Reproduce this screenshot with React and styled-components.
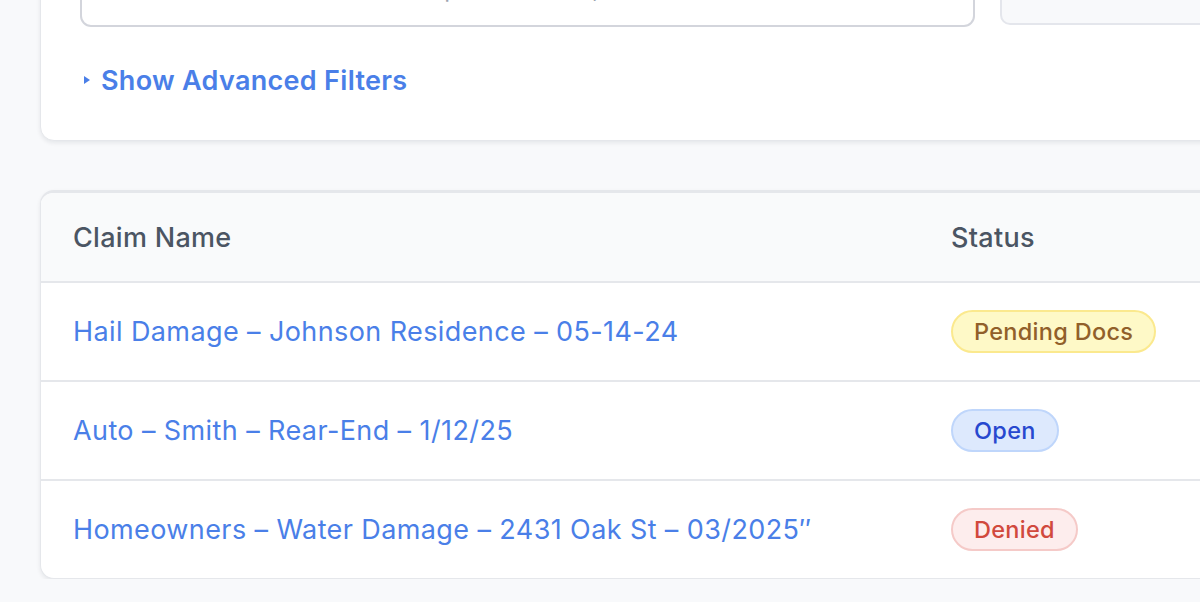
import React from "react";
import styled, { createGlobalStyle } from "styled-components";

const GlobalStyle = createGlobalStyle`
  html, body {
    margin: 0;
    padding: 0;
    background: #f8f9fb;
    overflow: hidden;
    font-family: Inter, "Noto Sans", "Liberation Sans", sans-serif;
  }
`;

const claims = [
  { name: "Hail Damage – Johnson Residence – 05-14-24", status: "pending" },
  { name: "Auto – Smith – Rear-End – 1/12/25", status: "open" },
  { name: "Homeowners – Water Damage – 2431 Oak St – 03/2025″", status: "denied" },
];

const statusLabels = {
  pending: "Pending Docs",
  open: "Open",
  denied: "Denied",
};

const badgeColors = {
  pending: { bg: "#fef9c7", border: "#fbe98e", text: "#91602a" },
  open: { bg: "#dde9fd", border: "#bfd6fb", text: "#2748cf" },
  denied: { bg: "#fdeded", border: "#f5cac8", text: "#d1493d" },
};

const App = () => {
  return (
    <>
      <GlobalStyle />
      <Page>
        <FilterCard>
          <SearchRow>
            <SearchInput placeholder="Search all claims (claimant or plate number, or file)" />
            <SortBox>Sort: Newest</SortBox>
          </SearchRow>
          <AdvancedToggle>
            <Caret />
            Show Advanced Filters
          </AdvancedToggle>
        </FilterCard>

        <TableCard>
          <HeaderRow>
            <HeadCell>Claim Name</HeadCell>
            <HeadCell>Status</HeadCell>
          </HeaderRow>
          {claims.map((c) => (
            <Row key={c.name}>
              <Cell>
                <ClaimLink href="#">{c.name}</ClaimLink>
              </Cell>
              <Cell>
                <Badge $status={c.status}>{statusLabels[c.status]}</Badge>
              </Cell>
            </Row>
          ))}
        </TableCard>
      </Page>
    </>
  );
};

export default App;

const Page = styled.div`
  width: 1500px;
  margin-top: -75px;
  padding: 0 40px;
  box-sizing: border-box;
  display: flex;
  flex-direction: column;
  gap: 49px;
`;

const FilterCard = styled.div`
  background: #fff;
  border: 1px solid #e5e7eb;
  border-radius: 14px;
  box-shadow: 0 2px 4px rgba(17, 24, 39, 0.08);
  padding: 24px 39px 44px;
  display: flex;
  flex-direction: column;
  gap: 37px;
`;

const SearchRow = styled.div`
  display: flex;
  align-items: flex-start;
  gap: 25px;
`;

const SearchInput = styled.input`
  width: 895px;
  height: 77px;
  box-sizing: border-box;
  border: 2px solid #d3d5dc;
  border-radius: 11px;
  padding: 0 20px 0 24px;
  font-family: inherit;
  font-size: 24px;
  color: #374151;
  background: #fff;
  outline: none;
  &::placeholder {
    color: #9ca3af;
  }
`;

const SortBox = styled.div`
  width: 360px;
  height: 75px;
  box-sizing: border-box;
  border: 2px solid #e4e6ec;
  border-radius: 10px;
  background: #f8f9fb;
  display: flex;
  align-items: center;
  padding: 0 20px;
  font-size: 22px;
  color: #374151;
`;

const AdvancedToggle = styled.div`
  display: flex;
  align-items: center;
  gap: 11px;
  height: 32px;
  padding-left: 4px;
  font-size: 27px;
  font-weight: 600;
  letter-spacing: 0.3px;
  color: #4a7fe8;
  cursor: pointer;
`;

const Caret = styled.span`
  width: 0;
  height: 0;
  border-top: 4px solid transparent;
  border-bottom: 4px solid transparent;
  border-left: 6px solid #4a7fe8;
`;

const TableCard = styled.div`
  background: #fff;
  border: 1px solid #e5e7eb;
  border-top: 3px solid #e5e7eb;
  border-radius: 14px;
  overflow: hidden;
  box-shadow: 0 2px 4px rgba(17, 24, 39, 0.08);
`;

const HeaderRow = styled.div`
  display: grid;
  grid-template-columns: 878px 1fr;
  height: 88px;
  background: #f9fafb;
  align-items: center;
`;

const HeadCell = styled.div`
  padding-left: 32px;
  font-size: 27px;
  font-weight: 500;
  letter-spacing: 0.3px;
  color: #4b5563;
`;

const Row = styled.div`
  display: grid;
  grid-template-columns: 878px 1fr;
  height: 97px;
  border-top: 2px solid #e5e7eb;
  align-items: center;
`;

const Cell = styled.div`
  padding-left: 32px;
  display: flex;
  align-items: center;
`;

const ClaimLink = styled.a`
  font-size: 27px;
  letter-spacing: 0.4px;
  color: #4a7fe8;
  text-decoration: none;
`;

const Badge = styled.span`
  display: inline-flex;
  align-items: center;
  height: 43px;
  box-sizing: border-box;
  padding: 0 21px;
  border-radius: 999px;
  font-size: 23.5px;
  font-weight: 500;
  letter-spacing: 0.3px;
  background: ${(p) => badgeColors[p.$status].bg};
  border: 2px solid ${(p) => badgeColors[p.$status].border};
  color: ${(p) => badgeColors[p.$status].text};
`;
